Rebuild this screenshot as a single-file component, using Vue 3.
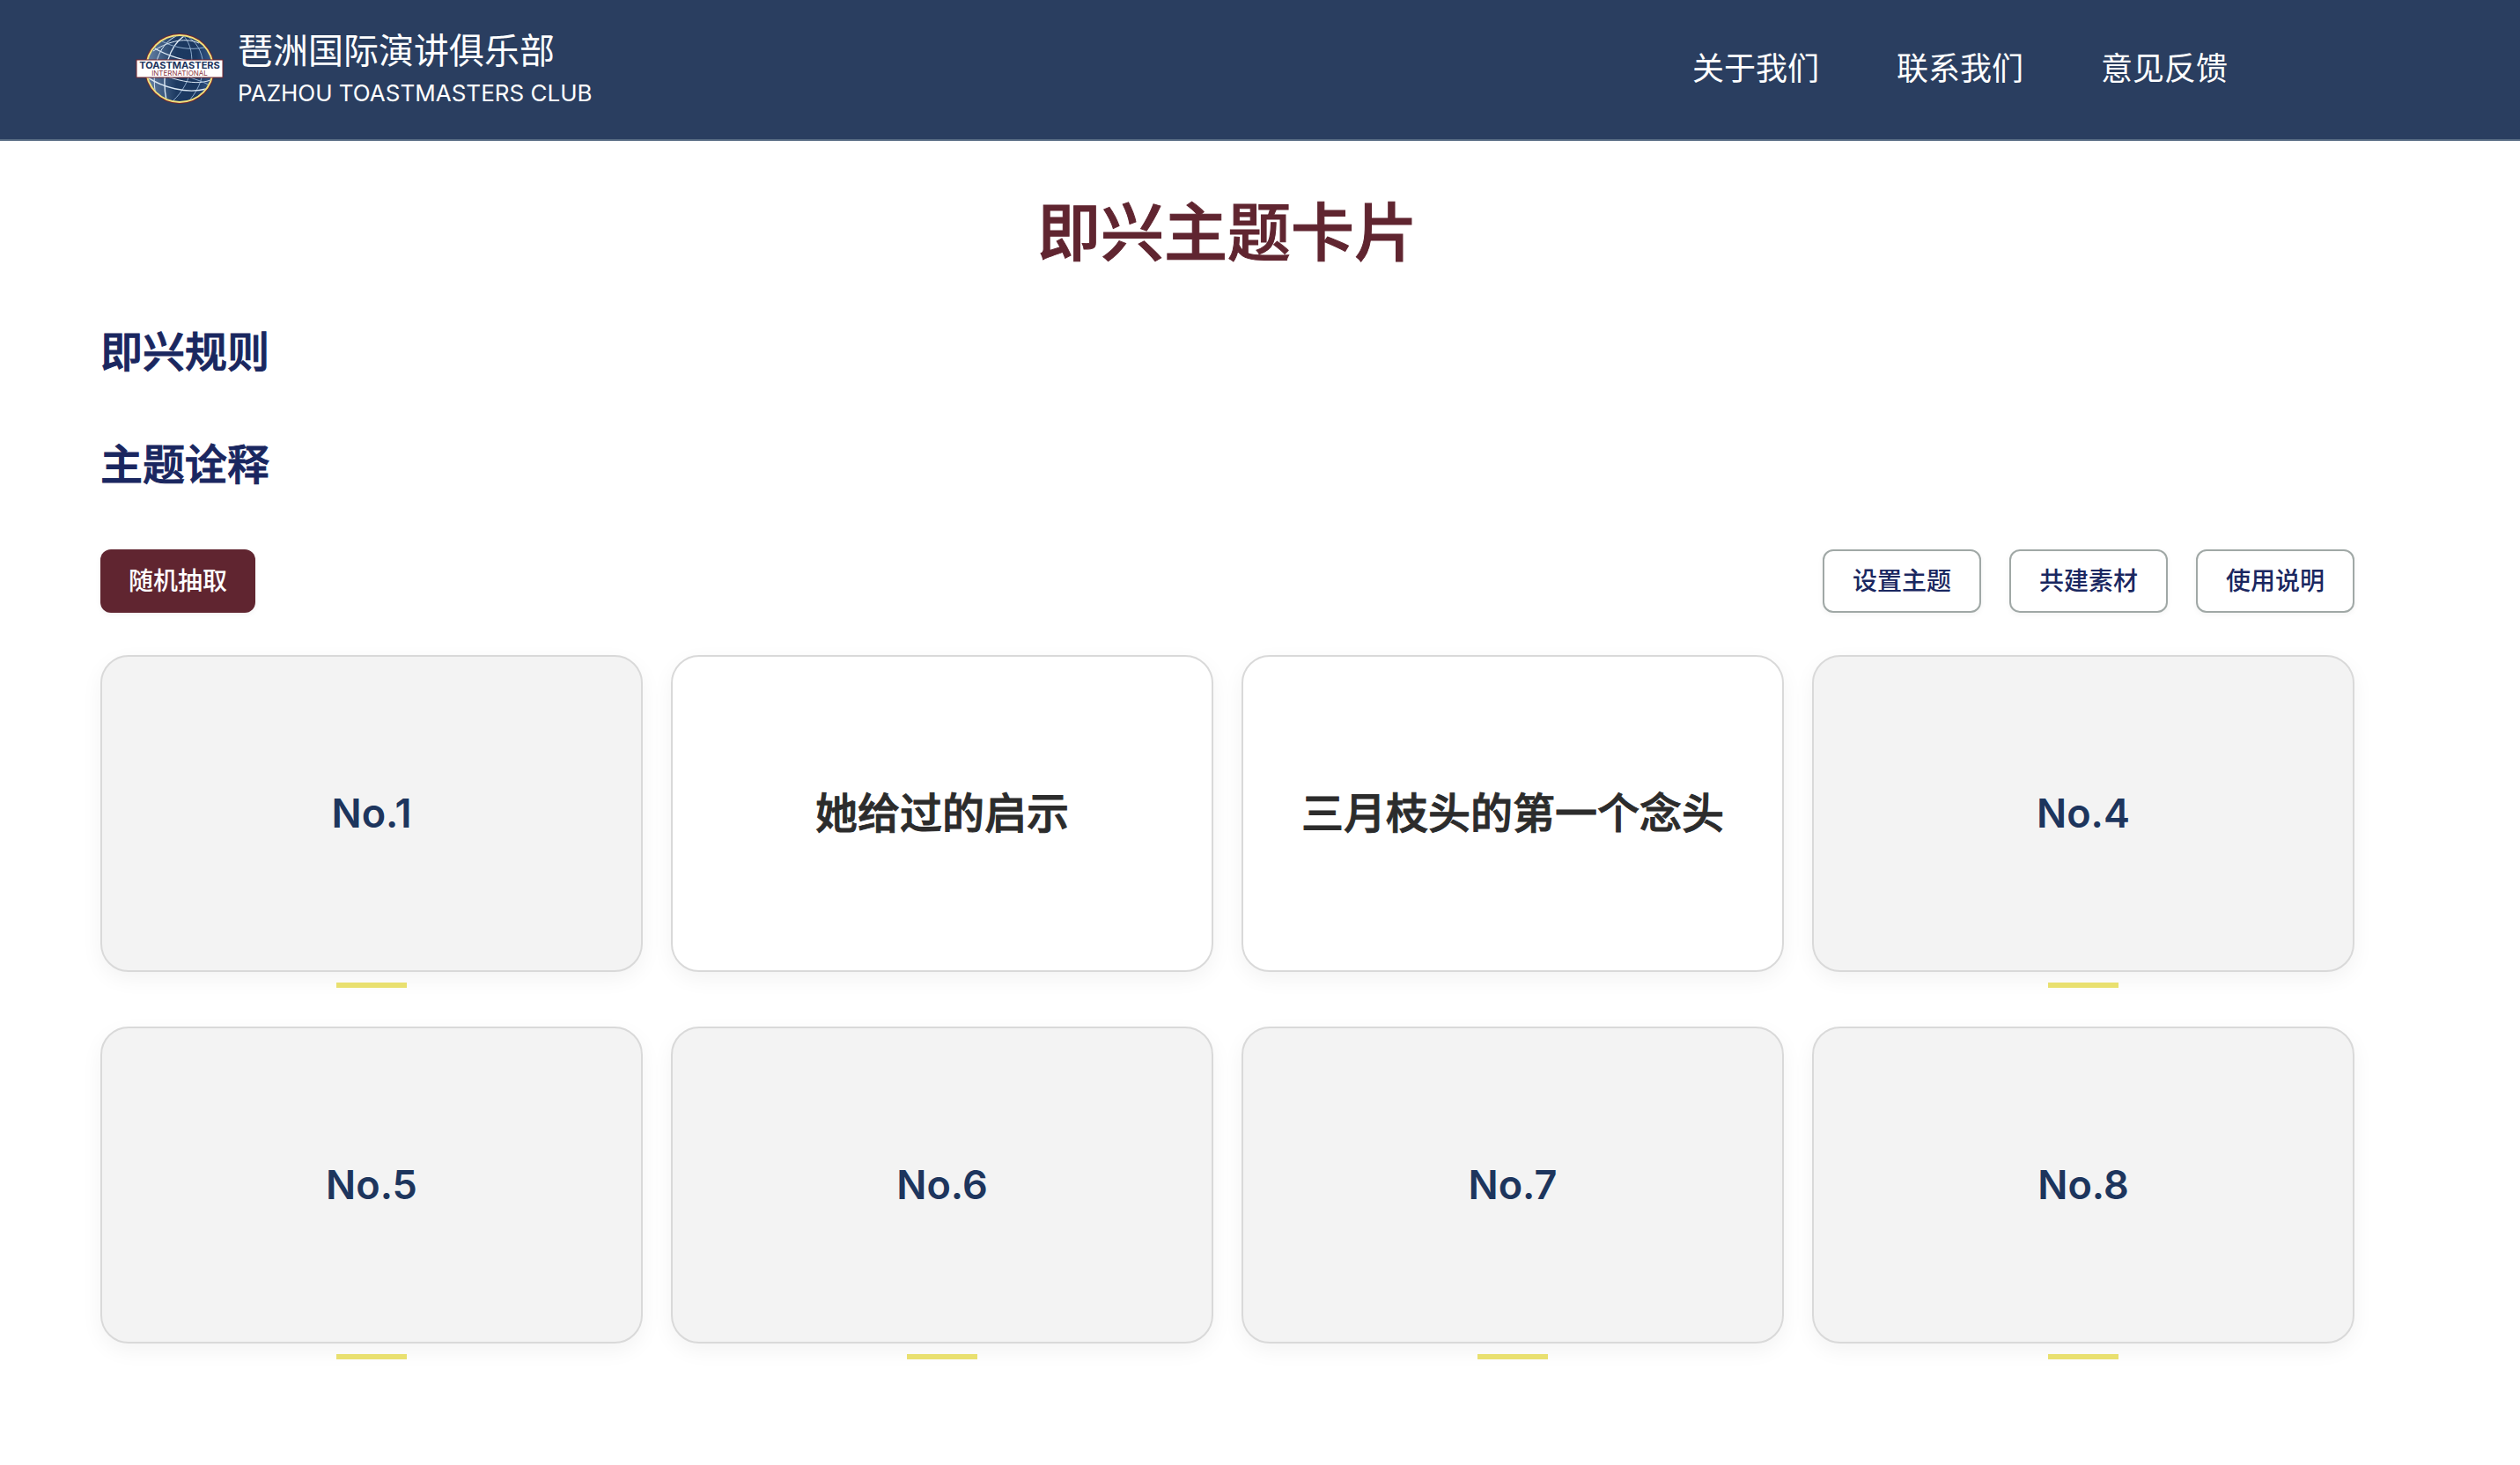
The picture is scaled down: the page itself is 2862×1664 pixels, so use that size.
<script setup>
import { ref } from 'vue';

const navLinks = ['关于我们', '联系我们', '意见反馈'];
const tools = ['设置主题', '共建素材', '使用说明'];

const cards = ref([
  { id: 1, topic: '春天的第一封信', opened: false },
  { id: 2, topic: '她给过的启示', opened: true },
  { id: 3, topic: '三月枝头的第一个念头', opened: true },
  { id: 4, topic: '一次勇敢的尝试', opened: false },
  { id: 5, topic: '我的秘密花园', opened: false },
  { id: 6, topic: '如果可以重来', opened: false },
  { id: 7, topic: '最难忘的旅行', opened: false },
  { id: 8, topic: '写给未来的自己', opened: false },
]);

const openCard = (card) => {
  card.opened = true;
};

// Open one of the cards that are still closed
const drawRandom = () => {
  const closed = cards.value.filter((card) => !card.opened);
  if (!closed.length) return;
  openCard(closed[Math.floor(Math.random() * closed.length)]);
};
</script>

<template>
  <div class="page">
    <header class="site-header">
      <a href="#" class="brand">
        <svg class="logo" viewBox="0 0 100 82" aria-hidden="true">
          <defs>
            <linearGradient id="globe" x1="0" y1="0" x2="1" y2="0">
              <stop offset="0" stop-color="#6682a6" />
              <stop offset="0.45" stop-color="#1d3a62" />
              <stop offset="0.75" stop-color="#1b3860" />
              <stop offset="1" stop-color="#35578a" />
            </linearGradient>
            <clipPath id="globe-clip"><circle cx="50" cy="41" r="37" /></clipPath>
          </defs>
          <circle cx="50" cy="41" r="40" fill="#74252c" />
          <circle cx="50" cy="41" r="39" fill="#f1e27c" />
          <circle cx="50" cy="41" r="37" fill="url(#globe)" />
          <g clip-path="url(#globe-clip)" fill="none" stroke="#dbe8f4" stroke-width="1">
            <path d="M55 4C40 14 28 42 35 77" stroke-width="1.4" />
            <path d="M46 4C30 12 18 32 22 66" />
            <path d="M55 4C70 22 66 56 42 78" stroke="#8fadce" />
            <path d="M58 4C80 16 84 50 62 76" stroke="#8fadce" />
            <path d="M22 18C38 28 60 32 86 38" stroke-width="1.4" />
            <path d="M30 10C46 18 62 20 78 17" stroke="#8fadce" />
            <path d="M20 21C34 12 54 4 72 12" />
            <path d="M12 50C30 62 58 70 80 64" stroke-width="1.4" />
            <path d="M13 42C36 50 64 62 85 54" />
            <path d="M62 51C70 54 78 56 84 60" stroke="#8fadce" />
          </g>
          <rect x="1" y="31" width="98" height="20" fill="#fff" stroke="#74252c" />
          <text x="50" y="41" class="logo-name">TOASTMASTERS</text>
          <text x="50" y="49" class="logo-sub">INTERNATIONAL</text>
        </svg>
        <span class="brand-text">
          <span class="brand-cn">琶洲国际演讲俱乐部</span>
          <span class="brand-en">PAZHOU TOASTMASTERS CLUB</span>
        </span>
      </a>
      <nav class="nav">
        <a v-for="link in navLinks" :key="link" href="#">{{ link }}</a>
      </nav>
    </header>

    <main class="content">
      <h1>即兴主题卡片</h1>
      <h2>即兴规则</h2>
      <h2>主题诠释</h2>

      <div class="toolbar">
        <button class="btn btn-primary" @click="drawRandom">随机抽取</button>
        <div class="tools">
          <button v-for="tool in tools" :key="tool" class="btn btn-outline">{{ tool }}</button>
        </div>
      </div>

      <div class="card-grid">
        <div v-for="card in cards" :key="card.id" class="card-slot">
          <button :class="['card', { opened: card.opened }]" @click="openCard(card)">
            {{ card.opened ? card.topic : `No.${card.id}` }}
          </button>
          <span v-if="!card.opened" class="marker"></span>
        </div>
      </div>
    </main>
  </div>
</template>

<style>
body {
  background: #fff;
}
</style>

<style scoped>
.page {
  font-family: Inter, 'Noto Sans CJK SC', sans-serif;
}

.site-header {
  display: flex;
  justify-content: space-between;
  align-items: center;
  padding: 26px 332px 28px 154px;
  background: #2a3e60;
  border-bottom: 2px solid #566a82;
}

.site-header a {
  color: #fff;
  text-decoration: none;
}

.brand {
  display: flex;
  align-items: center;
  gap: 16px;
}

.logo {
  width: 100px;
  height: 82px;
}

.logo-name {
  font-size: 11px;
  font-weight: 700;
  fill: #1d355d;
  text-anchor: middle;
}

.logo-sub {
  font-size: 8px;
  fill: #8c3a44;
  text-anchor: middle;
}

.brand-text {
  display: flex;
  flex-direction: column;
  padding-top: 8px;
}

.brand-cn {
  font-size: 40px;
  line-height: 48px;
}

.brand-en {
  font-size: 26px;
  line-height: 48px;
}

.nav {
  display: flex;
  gap: 88px;
  font-size: 36px;
  line-height: 48px;
}

.content {
  padding: 56px 188px 48px 114px;
}

h1,
h2 {
  margin: 0;
  font-weight: 500;
  -webkit-text-stroke: 1px currentColor;
}

h1 {
  margin-bottom: 56px;
  font-size: 72px;
  line-height: 96px;
  text-align: center;
  color: #602530;
}

h2 {
  margin-bottom: 64px;
  font-size: 48px;
  line-height: 64px;
  color: #1a2760;
}

.toolbar {
  display: flex;
  justify-content: space-between;
  margin-bottom: 48px;
}

.tools {
  display: flex;
  gap: 32px;
}

.btn {
  height: 72px;
  padding: 0 32px;
  border: none;
  border-radius: 12px;
  font-family: inherit;
  font-size: 28px;
  font-weight: 500;
  line-height: 40px;
  cursor: pointer;
  box-shadow: 0 2px 6px rgba(0, 0, 0, 0.05);
}

.btn-primary {
  background: #602530;
  color: #fff;
}

.btn-outline {
  border: 2px solid #a0a8a6;
  background: #fff;
  color: #1a2760;
}

.card-grid {
  display: grid;
  grid-template-columns: repeat(4, 1fr);
  gap: 32px;
}

.card-slot {
  display: flex;
  flex-direction: column;
  align-items: center;
  gap: 12px;
  padding-bottom: 12px;
}

.card {
  width: 100%;
  height: 360px;
  padding: 0 32px;
  border: 2px solid #d9d9d9;
  border-radius: 32px;
  background: #f3f3f3;
  color: #1d355d;
  font-family: inherit;
  font-size: 45px;
  font-weight: 600;
  line-height: 64px;
  cursor: pointer;
  box-shadow: 0 8px 24px rgba(0, 0, 0, 0.05);
}

.card.opened {
  background: #fff;
  color: #2c2c2c;
  font-size: 48px;
  font-weight: 500;
  -webkit-text-stroke: 1px currentColor;
}

.marker {
  width: 80px;
  height: 6px;
  background: #e9e070;
}
</style>
